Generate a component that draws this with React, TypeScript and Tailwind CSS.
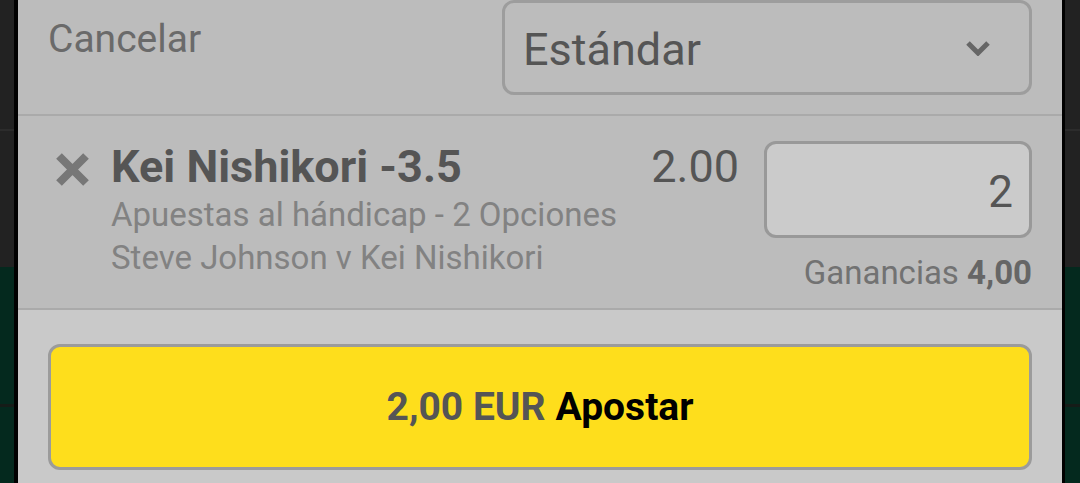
import { ReactNode } from 'react';

const FONT = { fontFamily: 'Roboto, "Noto Sans", Arial, sans-serif' };

// Dimmed page peeking out at the sides of the sheet
function PageEdge({ width }: { width: string }) {
  return (
    <div className={`flex flex-col ${width}`}>
      <div className="h-[129px] bg-[#222222]" />
      <div className="h-[2px] bg-[#2c2c2c]" />
      <div className="h-[136px] bg-[#222222]" />
      <div className="h-[137px] bg-[#04291e]" />
      <div className="h-[3px] bg-[#151c18]" />
      <div className="flex-1 bg-[#04291e]" />
    </div>
  );
}

function Section({ children, className }: { children: ReactNode; className: string }) {
  return <section className={`flex px-[30px] ${className}`}>{children}</section>;
}

function ChevronDown() {
  return (
    <svg width="26" height="16" viewBox="0 0 26 16" fill="none">
      <path d="M3 3l10 10 10-10" stroke="#666" strokeWidth="5" />
    </svg>
  );
}

function RemoveIcon() {
  return (
    <svg width="35" height="35" viewBox="0 0 35 35">
      <path d="M4 4l27 27M31 4L4 31" stroke="#777" strokeWidth="8" />
    </svg>
  );
}

export default function App() {
  return (
    <div className="flex h-[483px] w-[1080px] overflow-hidden bg-black" style={FONT}>
      <PageEdge width="w-[14px]" />
      <div className="w-[4px] bg-black" />

      <main className="flex w-[1044px] flex-col">
        {/* Stake type */}
        <Section className="h-[116px] items-start justify-between border-b-2 border-[#aaaaaa] bg-[#bcbcbc]">
          <span className="pt-[20px] text-[39px] leading-none text-[#6a6a6a]">Cancelar</span>
          <button className="flex h-[95px] w-[530px] items-center justify-between rounded-[12px] border-[3px] border-[#9d9d9d] pr-[38px] pl-[18px]">
            <span className="pt-[3px] text-[45px] leading-none text-[#555555]">Estándar</span>
            <ChevronDown />
          </button>
        </Section>

        {/* Selection */}
        <Section className="h-[194px] items-start border-b-2 border-[#aaaaaa] bg-[#bcbcbc]">
          <div className="ml-[7px] pt-[36px]">
            <RemoveIcon />
          </div>
          <div className="ml-[21px] flex flex-1 flex-col pt-[28px]">
            <span className="text-[45px] leading-none font-bold text-[#555555]">Kei Nishikori -3.5</span>
            <span className="mt-[4px] text-[33px] leading-[43px] text-[#828282]">Apuestas al hándicap - 2 Opciones</span>
            <span className="text-[33px] leading-[43px] text-[#828282]">Steve Johnson v Kei Nishikori</span>
          </div>
          <span className="pt-[28px] text-[45px] leading-none text-[#555555]">2.00</span>
          <div className="ml-[25px] flex flex-col items-end pt-[25px]">
            <div className="flex h-[97px] w-[268px] items-center justify-end rounded-[12px] border-[3px] border-[#999999] bg-[#cbcbcb] pr-[16px]">
              <span className="pt-[4px] text-[44px] leading-none text-[#555555]">2</span>
            </div>
            <span className="mt-[18px] text-[33px] leading-none text-[#727272]">
              Ganancias <b className="text-[#666666]">4,00</b>
            </span>
          </div>
        </Section>

        {/* Place bet */}
        <Section className="flex-1 bg-[#c9c9c9] pt-[34px]">
          <button className="flex h-[126px] w-full items-center justify-center rounded-[12px] border-[3px] border-[#9b9b9b] bg-[#fede1c] text-[39px] leading-none font-bold">
            <span className="text-[#555555]">2,00 EUR</span>
            <span className="ml-[10px] text-black">Apostar</span>
          </button>
        </Section>
      </main>

      <div className="w-[3px] bg-black" />
      <PageEdge width="w-[15px]" />
    </div>
  );
}
